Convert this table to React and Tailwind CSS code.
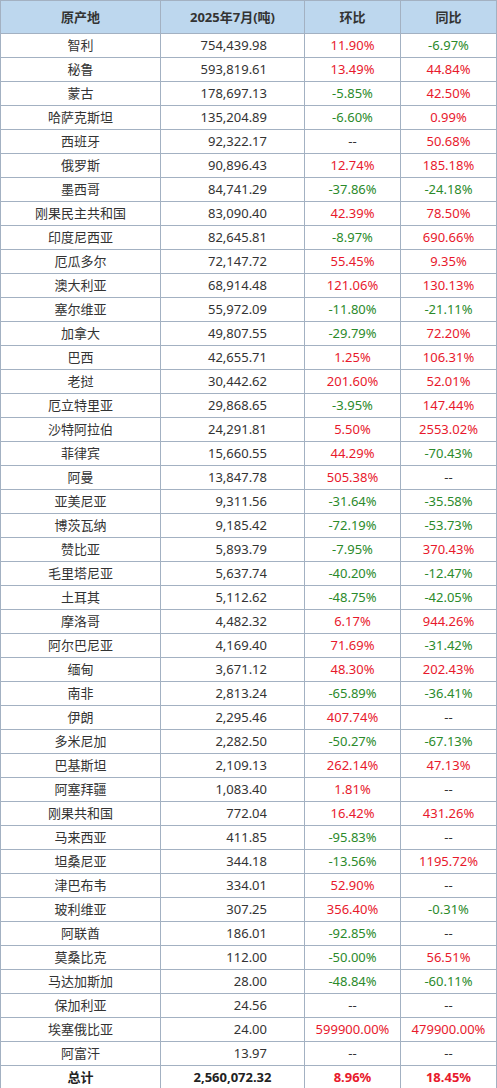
import React from "react";

const rows = [
  ["智利", "754,439.98", "11.90%", "-6.97%"],
  ["秘鲁", "593,819.61", "13.49%", "44.84%"],
  ["蒙古", "178,697.13", "-5.85%", "42.50%"],
  ["哈萨克斯坦", "135,204.89", "-6.60%", "0.99%"],
  ["西班牙", "92,322.17", "--", "50.68%"],
  ["俄罗斯", "90,896.43", "12.74%", "185.18%"],
  ["墨西哥", "84,741.29", "-37.86%", "-24.18%"],
  ["刚果民主共和国", "83,090.40", "42.39%", "78.50%"],
  ["印度尼西亚", "82,645.81", "-8.97%", "690.66%"],
  ["厄瓜多尔", "72,147.72", "55.45%", "9.35%"],
  ["澳大利亚", "68,914.48", "121.06%", "130.13%"],
  ["塞尔维亚", "55,972.09", "-11.80%", "-21.11%"],
  ["加拿大", "49,807.55", "-29.79%", "72.20%"],
  ["巴西", "42,655.71", "1.25%", "106.31%"],
  ["老挝", "30,442.62", "201.60%", "52.01%"],
  ["厄立特里亚", "29,868.65", "-3.95%", "147.44%"],
  ["沙特阿拉伯", "24,291.81", "5.50%", "2553.02%"],
  ["菲律宾", "15,660.55", "44.29%", "-70.43%"],
  ["阿曼", "13,847.78", "505.38%", "--"],
  ["亚美尼亚", "9,311.56", "-31.64%", "-35.58%"],
  ["博茨瓦纳", "9,185.42", "-72.19%", "-53.73%"],
  ["赞比亚", "5,893.79", "-7.95%", "370.43%"],
  ["毛里塔尼亚", "5,637.74", "-40.20%", "-12.47%"],
  ["土耳其", "5,112.62", "-48.75%", "-42.05%"],
  ["摩洛哥", "4,482.32", "6.17%", "944.26%"],
  ["阿尔巴尼亚", "4,169.40", "71.69%", "-31.42%"],
  ["缅甸", "3,671.12", "48.30%", "202.43%"],
  ["南非", "2,813.24", "-65.89%", "-36.41%"],
  ["伊朗", "2,295.46", "407.74%", "--"],
  ["多米尼加", "2,282.50", "-50.27%", "-67.13%"],
  ["巴基斯坦", "2,109.13", "262.14%", "47.13%"],
  ["阿塞拜疆", "1,083.40", "1.81%", "--"],
  ["刚果共和国", "772.04", "16.42%", "431.26%"],
  ["马来西亚", "411.85", "-95.83%", "--"],
  ["坦桑尼亚", "344.18", "-13.56%", "1195.72%"],
  ["津巴布韦", "334.01", "52.90%", "--"],
  ["玻利维亚", "307.25", "356.40%", "-0.31%"],
  ["阿联酋", "186.01", "-92.85%", "--"],
  ["莫桑比克", "112.00", "-50.00%", "56.51%"],
  ["马达加斯加", "28.00", "-48.84%", "-60.11%"],
  ["保加利亚", "24.56", "--", "--"],
  ["埃塞俄比亚", "24.00", "599900.00%", "479900.00%"],
  ["阿富汗", "13.97", "--", "--"],
];

const font = { fontFamily: "'Noto Sans', 'Noto Sans CJK SC', sans-serif" };

function pctClass(v) {
  if (v === "--") return "text-[#333]";
  return v.startsWith("-") ? "text-[#2b8a2b]" : "text-[#e8192c]";
}

const cell = "border-r border-b border-[#a3b1c2] h-6 leading-[23px] text-[13px]";

export default function App() {
  return (
    <div className="w-[497px] bg-white" style={font}>
      <div className="border-t border-l border-[#a3b1c2] w-[497px]">
        <div className="grid grid-cols-[160px_144px_96px_96px] bg-[#bdd7ee] font-bold text-[#333]">
          {["原产地", "2025年7月(吨)", "环比", "同比"].map((h) => (
            <div key={h} className="border-r border-b border-[#a3b1c2] h-[33px] leading-[32px] text-center text-[13px]">
              {h}
            </div>
          ))}
        </div>
        {rows.map((r) => (
          <div key={r[0]} className="grid grid-cols-[160px_144px_96px_96px] text-[#333]">
            <div className={`${cell} text-center`}>{r[0]}</div>
            <div className={`${cell} text-right pr-[37px]`}>{r[1]}</div>
            <div className={`${cell} text-center ${pctClass(r[2])}`}>{r[2]}</div>
            <div className={`${cell} text-center ${pctClass(r[3])}`}>{r[3]}</div>
          </div>
        ))}
        <div className="grid grid-cols-[160px_144px_96px_96px] font-bold text-[#222]">
          <div className={`${cell} text-center`}>总计</div>
          <div className={`${cell} text-center`}>2,560,072.32</div>
          <div className={`${cell} text-center text-[#e8192c]`}>8.96%</div>
          <div className={`${cell} text-center text-[#e8192c]`}>18.45%</div>
        </div>
      </div>
    </div>
  );
}
